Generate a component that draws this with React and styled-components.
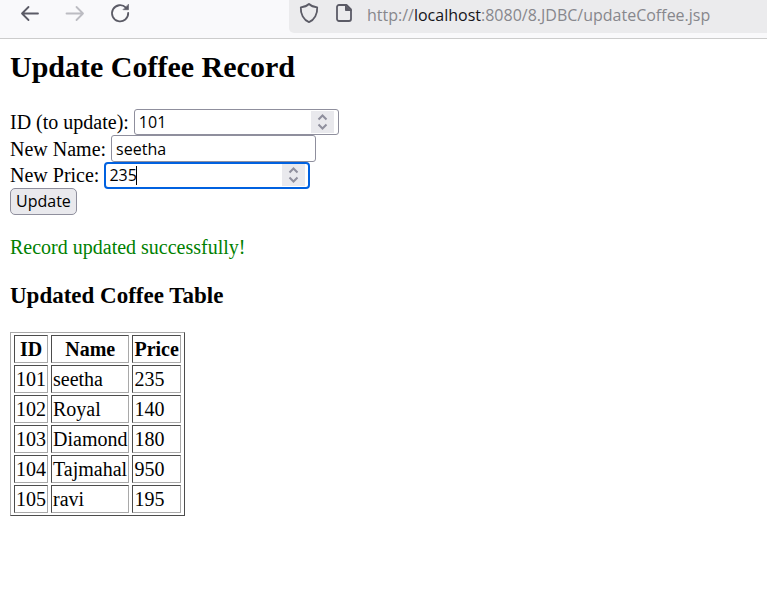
import React from "react";
import styled, { createGlobalStyle, css } from "styled-components";

const serif = '"Liberation Serif", "Times New Roman", serif';
const sans = '"Open Sans", "Noto Sans", sans-serif';

const GlobalStyle = createGlobalStyle`
  body {
    margin: 0;
    background: #fff;
    color: #000;
    font: 20px/22px ${serif};
  }
`;

const Toolbar = styled.header`
  display: flex;
  align-items: flex-start;
  height: 38px;
  padding-left: 16px;
  background: #f9f9fb;
  border-bottom: 1px solid #ccc;
  overflow: hidden;
`;

const NavButtons = styled.nav`
  display: flex;
  flex: none;
  gap: 17px;
  width: 273px;
`;

const IconButton = styled.button`
  display: flex;
  padding: 0;
  border: 0;
  background: none;
  color: #5b5b66;

  &:disabled {
    color: #bcbcc2;
  }
`;

const AddressBar = styled.div`
  display: flex;
  flex: 1;
  min-width: 0;
  height: 33px;
  padding-left: 6px;
  gap: 7px;
  background: #ebebed;
  border-bottom-left-radius: 5px;
`;

const Url = styled.a`
  margin-left: 2px;
  color: #87878c;
  font: 16px/30px ${sans};
  text-decoration: none;
  white-space: nowrap;
`;

const Host = styled.span`
  color: #15141a;
`;

const Page = styled.main`
  padding: 10px;
`;

const Title = styled.h2`
  margin: 0 0 24px;
  font-size: 30px;
  line-height: 36px;
`;

const Form = styled.form`
  display: flex;
  flex-direction: column;
  align-items: flex-start;
`;

const Field = styled.div`
  display: flex;
  align-items: center;
  gap: 5px;
  height: ${(p) => (p.$tall ? 27 : 26)}px;
`;

const InputFrame = styled.span`
  position: relative;
  display: flex;
  align-items: center;
  box-sizing: border-box;
  width: ${(p) => (p.$compact ? 206 : 205)}px;
  height: 100%;
  padding: 0 4px 0 ${(p) => (p.$focused ? 3 : 4)}px;
  border: 1px solid #8f8f9d;
  border-radius: 3px;
  background: #fff;
  ${(p) =>
    p.$focused &&
    css`
      height: 27px;
      padding-right: 3px;
      border: 2px solid #0061e0;
      border-radius: 4px;
    `}
`;

const Input = styled.input`
  flex: 1;
  min-width: 0;
  height: 22px;
  padding: 0;
  border: 0;
  outline: 0;
  background: none;
  color: #000;
  font: 16px/22px ${sans};
  appearance: textfield;

  &::-webkit-inner-spin-button {
    display: none;
  }
`;

const Caret = styled.span`
  position: absolute;
  left: 30px;
  top: 2px;
  width: 1px;
  height: 19px;
  background: #000;
`;

const Spinner = styled.span`
  display: flex;
  flex: none;
  justify-content: center;
  width: 23px;
  height: 22px;
  background: #e9e9ed;
`;

const Submit = styled.button`
  height: 27px;
  padding: 0 5px;
  border: 1px solid #8f8f9d;
  border-radius: 5px;
  background: #e9e9ed;
  color: #000;
  font: 16px/25px ${sans};
`;

const Message = styled.p`
  margin: 21px 0 23px;
  color: #008000;
`;

const Subtitle = styled.h3`
  margin: 0 0 21px;
  font-size: 23px;
  line-height: 30px;
`;

const Table = styled.table`
  border: 1px solid;
  border-color: #a9a9a9 #4c4c4c #4c4c4c #a9a9a9;
  border-collapse: separate;
  border-spacing: 3px 2px;
`;

const cell = css`
  height: 26px;
  padding: 0 1px;
  border: 1px solid;
  border-color: #4c4c4c #a9a9a9 #a9a9a9 #4c4c4c;
  line-height: 26px;
`;

const HeadCell = styled.th`
  ${cell}
`;

const Cell = styled.td`
  ${cell}
`;

const coffees = [
  { id: 101, name: "seetha", price: 235 },
  { id: 102, name: "Royal", price: 140 },
  { id: 103, name: "Diamond", price: 180 },
  { id: 104, name: "Tajmahal", price: 950 },
  { id: 105, name: "ravi", price: 195 },
];

const stroke = {
  fill: "none",
  stroke: "currentColor",
  strokeWidth: 1.8,
  strokeLinecap: "round",
  strokeLinejoin: "round",
};

function BackIcon() {
  return (
    <svg width="28" height="28" viewBox="0 0 28 28" {...stroke}>
      <path d="M22 13.5H6M12.5 7 6 13.5l6.5 6.5" />
    </svg>
  );
}

function ForwardIcon() {
  return (
    <svg width="28" height="28" viewBox="0 0 28 28" {...stroke}>
      <path d="M5.500 13.500H22M15.500 7 22 13.500 15.500 20" />
    </svg>
  );
}

function ReloadIcon() {
  return (
    <svg width="28" height="28" viewBox="0 0 28 28" {...stroke}>
      <path d="M22.200 12.800a8.100 8.100 0 1 1-2.300-5.200" />
      <path d="M22.500 4.500v5.200h-5.200z" fill="currentColor" strokeWidth="0.600" />
    </svg>
  );
}

function ShieldIcon() {
  return (
    <svg width="28" height="28" viewBox="0 0 28 28" {...stroke}>
      <path d="M14 4c2 2 5.200 3 8.200 3.300C22.600 14 19.500 20 14 22.200 8.500 20 5.400 14 5.800 7.300 8.800 7 12 6 14 4z" />
    </svg>
  );
}

function PageIcon() {
  return (
    <svg width="28" height="28" viewBox="0 0 28 28" {...stroke}>
      <path d="M9 5h7.500l4.500 4.500v9.500a2 2 0 0 1-2 2H9a2 2 0 0 1-2-2V7a2 2 0 0 1 2-2z" />
      <path d="M15.500 5v5.500H21z" fill="currentColor" strokeWidth="1" />
    </svg>
  );
}

function SpinArrows() {
  return (
    <Spinner aria-hidden="true">
      <svg width="23" height="22" viewBox="0 0 23 22" fill="none" stroke="#8f8f9d" strokeWidth="2">
        <path d="M7.500 8.500 11.500 4.500l4 4M7.500 13.500l4 4 4-4" />
      </svg>
    </Spinner>
  );
}

export default function App() {
  return (
    <>
      <GlobalStyle />
      <Toolbar>
        <NavButtons aria-label="History">
          <IconButton aria-label="Back"><BackIcon /></IconButton>
          <IconButton aria-label="Forward" disabled><ForwardIcon /></IconButton>
          <IconButton aria-label="Reload"><ReloadIcon /></IconButton>
        </NavButtons>
        <AddressBar>
          <IconButton aria-label="Tracking protection"><ShieldIcon /></IconButton>
          <IconButton aria-label="Site information"><PageIcon /></IconButton>
          <Url href="http://localhost:8080/8.JDBC/updateCoffee.jsp">
            http://<Host>localhost</Host>:8080/8.JDBC/updateCoffee.jsp
          </Url>
        </AddressBar>
      </Toolbar>
      <Page>
        <Title>Update Coffee Record</Title>
        <Form onSubmit={(e) => e.preventDefault()}>
          <Field>
            <label htmlFor="id">ID (to update):</label>
            <InputFrame>
              <Input id="id" type="number" defaultValue="101" />
              <SpinArrows />
            </InputFrame>
          </Field>
          <Field $tall>
            <label htmlFor="name">New Name:</label>
            <InputFrame>
              <Input id="name" type="text" defaultValue="seetha" />
            </InputFrame>
          </Field>
          <Field>
            <label htmlFor="price">New Price:</label>
            <InputFrame $compact $focused>
              <Input id="price" type="number" defaultValue="235" />
              <Caret />
              <SpinArrows />
            </InputFrame>
          </Field>
          <Submit type="submit">Update</Submit>
        </Form>
        <Message>Record updated successfully!</Message>
        <Subtitle>Updated Coffee Table</Subtitle>
        <Table>
          <thead>
            <tr>
              <HeadCell>ID</HeadCell>
              <HeadCell>Name</HeadCell>
              <HeadCell>Price</HeadCell>
            </tr>
          </thead>
          <tbody>
            {coffees.map((c) => (
              <tr key={c.id}>
                <Cell>{c.id}</Cell>
                <Cell>{c.name}</Cell>
                <Cell>{c.price}</Cell>
              </tr>
            ))}
          </tbody>
        </Table>
      </Page>
    </>
  );
}
